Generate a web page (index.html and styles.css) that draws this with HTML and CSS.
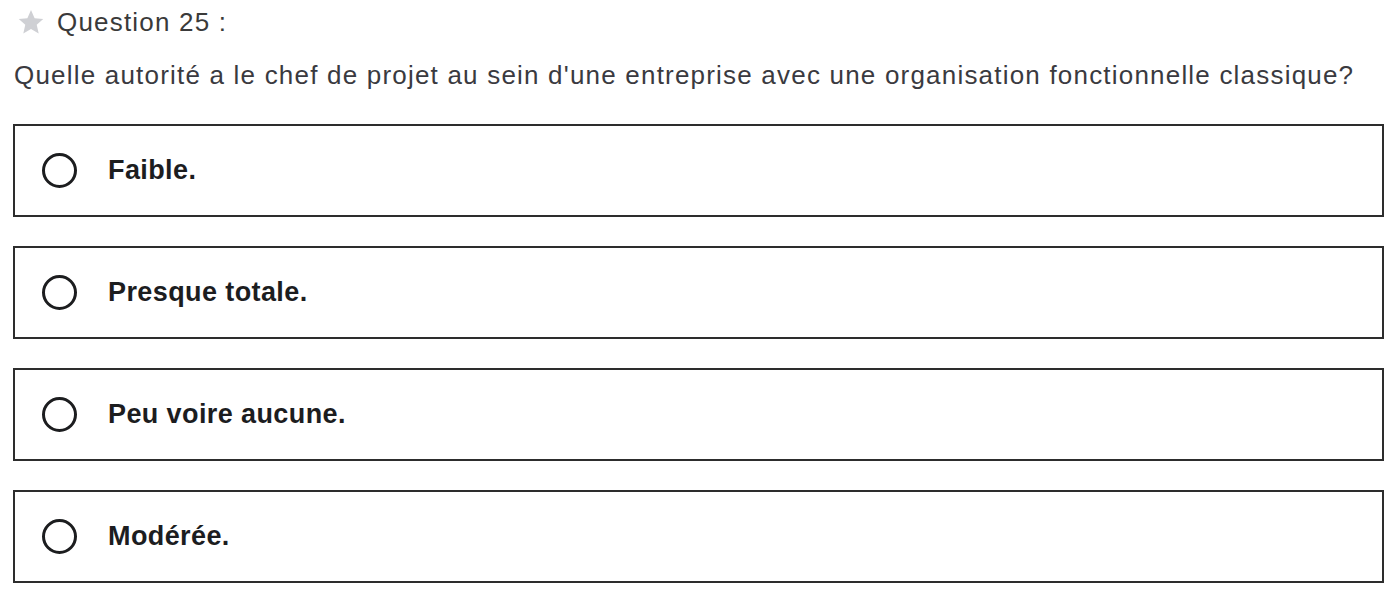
FILE: index.html
```html
<!DOCTYPE html>
<html lang="fr">
<head>
<meta charset="utf-8">
<title>Question 25</title>
<link rel="stylesheet" href="styles.css">
</head>
<body>
<div class="quiz">
  <div class="q-header">
    <svg class="star" viewBox="0 0 24 24" width="28" height="28" aria-hidden="true">
      <path d="M12 1.8l3.1 6.9 7.4.7-5.6 5 1.7 7.4L12 17.9l-6.6 3.9 1.7-7.4-5.6-5 7.4-.7z" fill="#cfd0d4"/>
    </svg>
    <span class="q-label">Question 25 :</span>
  </div>
  <p class="q-text">Quelle autorité a le chef de projet au sein d'une entreprise avec une organisation fonctionnelle classique?</p>
  <div class="options">
    <label class="option"><span class="radio"></span><span class="opt-text">Faible.</span></label>
    <label class="option"><span class="radio"></span><span class="opt-text">Presque totale.</span></label>
    <label class="option"><span class="radio"></span><span class="opt-text">Peu voire aucune.</span></label>
    <label class="option"><span class="radio"></span><span class="opt-text">Modérée.</span></label>
  </div>
</div>
</body>
</html>
```
FILE: styles.css
```css
html, body {
  margin: 0;
  padding: 0;
  background: #ffffff;
}
.quiz {
  width: 1371px;
  margin-left: 13px;
  font-family: "Liberation Sans", Arial, sans-serif;
}
.q-header {
  display: flex;
  align-items: center;
  height: 44px;
  padding-left: 4px;
}
.star {
  display: block;
  margin-right: 12px;
}
.q-label {
  font-size: 26px;
  letter-spacing: 1.2px;
  color: #3a3a3a;
}
.q-text {
  margin: 0;
  padding-top: 15px;
  height: 80px;
  font-size: 26px;
  letter-spacing: 1.2px;
  line-height: 32px;
  color: #3a3a40;
  padding-left: 1px;
  box-sizing: border-box;
  white-space: nowrap;
}
.options {
  display: flex;
  flex-direction: column;
  gap: 29px;
}
.option {
  display: flex;
  align-items: center;
  height: 93px;
  box-sizing: border-box;
  border: 2px solid #2d2d2d;
  padding-left: 27px;
}
.radio {
  width: 35px;
  height: 35px;
  box-sizing: border-box;
  border: 3px solid #1c1d1f;
  border-radius: 50%;
  margin-right: 31px;
  flex: none;
}
.opt-text {
  font-size: 27px;
  font-weight: bold;
  letter-spacing: 0.4px;
  color: #1c1d1f;
}
```
